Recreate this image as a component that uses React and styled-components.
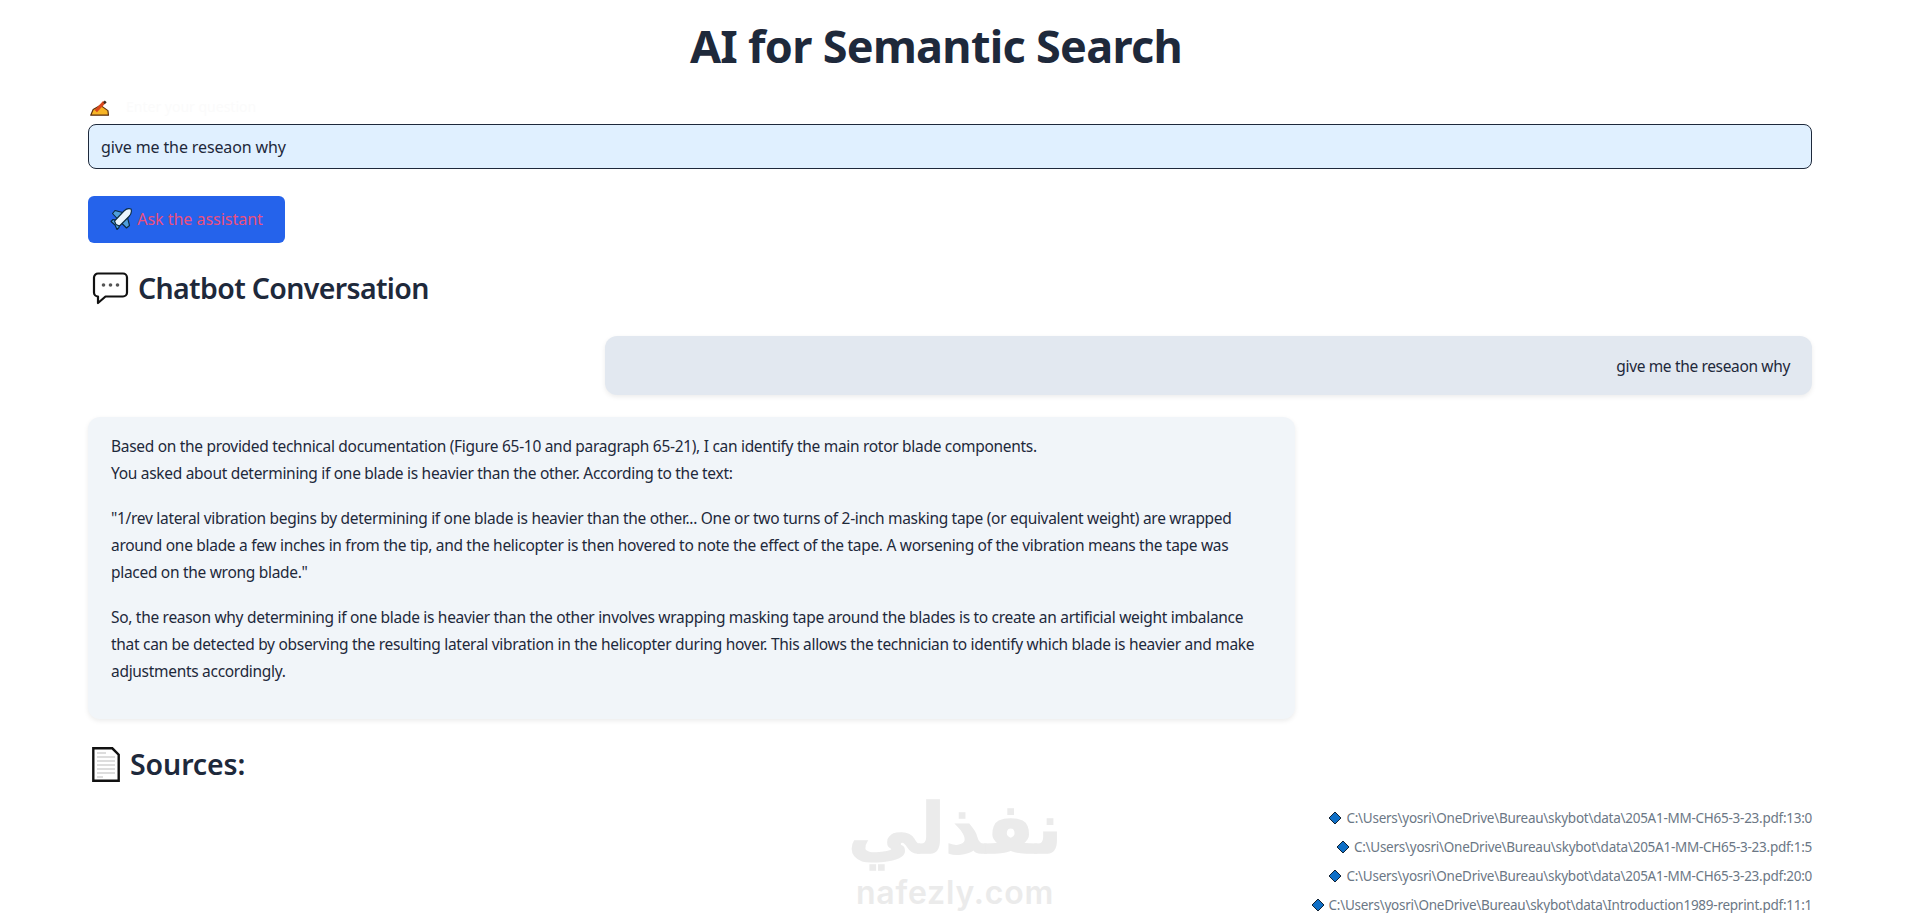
import React from "react";
import styled, { createGlobalStyle } from "styled-components";

const Global = createGlobalStyle`
  html, body { margin: 0; padding: 0; background: #fff; height: 913px; overflow: hidden; }
  body { font-family: "Noto Sans", "Open Sans", sans-serif; color: #1e293b; }
`;
const Page = styled.main`
  position: relative;
  box-sizing: border-box;
  height: 913px;
  overflow: hidden;
  padding: 0 96px 0 88px;
`;
const Title = styled.h1`
  margin: 0;
  padding: 14px 28px 0 0;
  height: 90px;
  box-sizing: border-box;
  font-size: 45px;
  line-height: 64px;
  font-weight: 700;
  text-align: center;
  color: #1e293b;
  letter-spacing: -0.7px;
`;
const Label = styled.div`
  display: flex;
  align-items: flex-end;
  gap: 17px;
  height: 34px;
  padding: 0 0 8px 2px;
  box-sizing: border-box;
  font-size: 14px;
  line-height: 18px;
  color: #fbfbfb;
`;
const Field = styled.div`
  box-sizing: border-box;
  height: 45px;
  display: flex;
  align-items: center;
  padding: 0 12px;
  background: #e0f0ff;
  border: 1px solid #1e293b;
  border-radius: 8px;
  font-size: 16px;
  letter-spacing: -0.12px;
  color: #1e293b;
`;
const AskButton = styled.button`
  display: flex;
  align-items: center;
  justify-content: center;
  gap: 5px;
  margin-top: 27px;
  padding: 0 0 2px;
  width: 197px;
  height: 47px;
  border: 0;
  border-radius: 6px;
  background: #2563eb;
  color: #ec4f7c;
  font: 400 16px "Noto Sans", sans-serif;
  letter-spacing: -0.02px;
`;
const Heading = styled.h2`
  display: flex;
  align-items: center;
  margin: ${(p) => p.$top}px 0 0;
  padding-left: ${(p) => p.$inset}px;
  height: 44px;
  gap: ${(p) => p.$gap}px;
  font-size: 28.5px;
  font-weight: 600;
  letter-spacing: ${(p) => p.$track}px;
  color: #1e293b;
`;
const Bubble = styled.div`
  box-sizing: border-box;
  width: 1207px;
  background: ${(p) => (p.$user ? "#e2e8f0" : "#f1f5f9")};
  border-radius: 12px;
  box-shadow: 0 2px 5px rgba(0, 0, 0, 0.08);
  margin-left: ${(p) => (p.$user ? "auto" : "0")};
`;
const UserBubble = styled(Bubble)`
  margin-top: 26px;
  height: 59px;
  padding: 0 22px;
  display: flex;
  align-items: center;
  justify-content: flex-end;
  font-size: 15.5px;
  letter-spacing: -0.35px;
`;
const AssistantBubble = styled(Bubble)`
  margin-top: 22px;
  height: 302px;
  padding: 16px 26px 16px 23px;
  font-size: 15.5px;
  line-height: 27px;
  letter-spacing: -0.3px;
`;
const Para = styled.p`
  margin: 0 0 18px;
`;
const Sources = styled.ul`
  list-style: none;
  margin: 17px 0 0;
  padding: 0;
  display: flex;
  flex-direction: column;
  align-items: flex-end;
`;
const Source = styled.li`
  display: flex;
  align-items: center;
  gap: 4px;
  height: 29px;
  font-size: 13.5px;
  letter-spacing: -0.26px;
  color: #6b7785;
`;
const Watermark = styled.div`
  position: absolute;
  left: 846px;
  top: 790px;
  width: 218px;
  display: flex;
  flex-direction: column;
  align-items: center;
  color: #ebebeb;
  pointer-events: none;
`;
const WatermarkAr = styled.div`
  font: 700 70px/78px "DejaVu Sans", sans-serif;
  -webkit-text-stroke: 1.5px #ebebeb;
`;
const WatermarkEn = styled.div`
  font: 600 32px/38px "Inter", sans-serif;
  letter-spacing: 0.8px;
  margin-top: 6px;
`;

const Hand = () => (
  <svg width="19" height="16" viewBox="0 0 18 15">
    <path d="M.7 14.300 3 9l7-4 7 5 .5 4.300z" fill="#f7b526" stroke="#5a2d0c" strokeWidth="1.100" strokeLinejoin="round" />
    <path d="M5.500 10.500 13.500 2" stroke="#d9481c" strokeWidth="3" />
    <path d="M12.500 2 14 .5l1.800 1.500-1.800 2z" fill="#3b2a20" />
  </svg>
);
const Plane = () => (
  <svg width="22" height="22" viewBox="0 0 22 22">
    <g stroke="#0b2a3f" strokeWidth="1.100" strokeLinejoin="round">
      <path d="M2.500 5.500 5 2.500 14.500 5 8.500 12z" fill="#4f9fdc" />
      <path d="M16.500 20 19.500 17.500 17 7.500 10 13.500z" fill="#4f9fdc" />
      <path d="M1 13.500 3 11.500l5.500 1 1.500 1.500-1 5.500-2 2L5 17z" fill="#4f9fdc" />
      <path d="M21 1C18.500.2 15.800 1.200 14 3L4.500 13 6 16.500 9.500 18l9.500-9.500c1.800-1.800 2.800-5 2-7.500z" fill="#eaf6fd" />
    </g>
  </svg>
);
const Speech = () => (
  <svg width="37" height="33" viewBox="0 0 37 33">
    <path d="M6 1.500h25a4 4 0 0 1 4 4v15a4 4 0 0 1-4 4H13.500L6 31v-6.500a4 4 0 0 1-4-4v-15a4 4 0 0 1 4-4z" fill="#fff" stroke="#111" strokeWidth="2.200" strokeLinejoin="round" />
    <circle cx="11.500" cy="13" r="1.800" fill="#555" />
    <circle cx="18.500" cy="13" r="1.800" fill="#555" />
    <circle cx="25.500" cy="13" r="1.800" fill="#555" />
  </svg>
);
const Doc = () => (
  <svg width="28" height="35" viewBox="0 0 28 35">
    <path d="M1.300 1.300h19l6.400 6.400v26h-25.400z" fill="#fff" stroke="#111" strokeWidth="2.400" />
    <path d="M5 6h9M5 10h18M5 14h18M5 18h18M5 22h18M5 26h18M5 30h6" stroke="#bbb" strokeWidth="1.200" />
  </svg>
);
const Diamond = () => (
  <svg width="14" height="14" viewBox="0 0 14 14">
    <path d="M7 1l6 6-6 6-6-6z" fill="#0f6fc6" stroke="#123" strokeWidth="1" />
  </svg>
);

const base = "C:\\Users\\yosri\\OneDrive\\Bureau\\skybot\\data\\";
const sources = [
  "205A1-MM-CH65-3-23.pdf:13:0",
  "205A1-MM-CH65-3-23.pdf:1:5",
  "205A1-MM-CH65-3-23.pdf:20:0",
  "Introduction1989-reprint.pdf:11:1",
];

export default function App() {
  return (
    <Page>
      <Global />
      <Title>AI for Semantic Search</Title>
      <Label>
        <Hand />
        <span>Enter your question</span>
      </Label>
      <Field>give me the reseaon why</Field>
      <AskButton>
        <Plane />
        Ask the assistant
      </AskButton>
      <Heading $top={23} $gap={9} $inset={4} $track={-0.65}>
        <Speech />
        Chatbot Conversation
      </Heading>
      <UserBubble $user>give me the reseaon why</UserBubble>
      <AssistantBubble>
        <Para>
          Based on the provided technical documentation (Figure 65-10 and paragraph 65-21), I can identify the main rotor blade components.
          <br />
          You asked about determining if one blade is heavier than the other. According to the text:
        </Para>
        <Para>
          "1/rev lateral vibration begins by determining if one blade is heavier than the other... One or two turns of 2-inch masking tape (or equivalent weight) are wrapped around one blade a few inches in from the tip, and the helicopter is then hovered to note the effect of the tape. A worsening of the vibration means the tape was placed on the wrong blade."
        </Para>
        <Para>
          So, the reason why determining if one blade is heavier than the other involves wrapping masking tape around the blades is to create an artificial weight imbalance that can be detected by observing the resulting lateral vibration in the helicopter during hover. This allows the technician to identify which blade is heavier and make adjustments accordingly.
        </Para>
      </AssistantBubble>
      <Heading $top={23} $gap={10} $inset={4} $track={-0.1}>
        <Doc />
        Sources:
      </Heading>
      <Sources>
        {sources.map((s) => (
          <Source key={s}>
            <Diamond />
            {base + s}
          </Source>
        ))}
      </Sources>
      <Watermark>
        <WatermarkAr>نفذلي</WatermarkAr>
        <WatermarkEn>nafezly.com</WatermarkEn>
      </Watermark>
    </Page>
  );
}
